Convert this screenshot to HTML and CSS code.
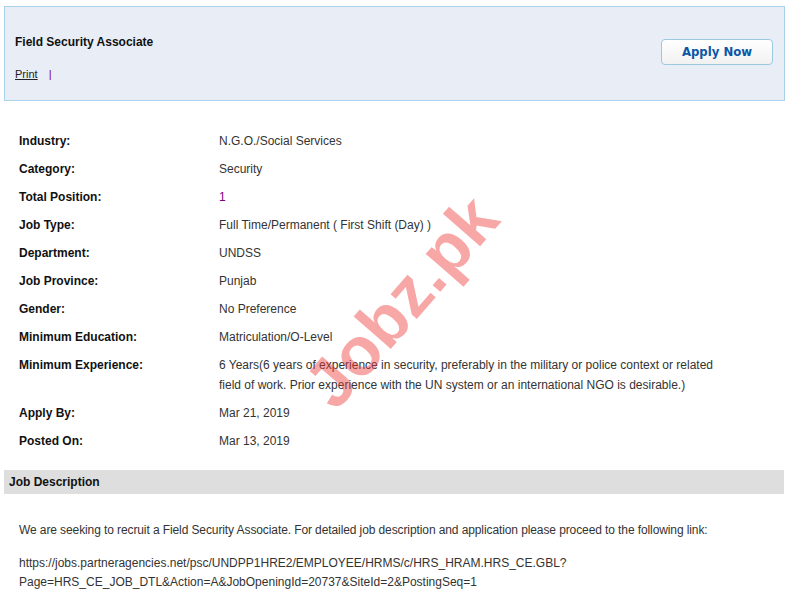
FILE: index.html
```html
<!DOCTYPE html>
<html lang="en">
<head>
    <meta charset="UTF-8">
    <meta name="viewport" content="width=device-width, initial-scale=1.0">
    <title>Field Security Associate</title>
    <link rel="stylesheet" href="styles.css">
</head>
<body>

    <!-- Job Header -->
    <div class="job-head">
        <div class="job-head-left">
            <h1 class="job-title">Field Security Associate</h1>
            <div class="job-tools">
                <a href="#" class="print-link">Print</a>
                <span class="sep">|</span>
            </div>
        </div>
        <a href="#" class="apply-btn">Apply Now</a>
    </div>

    <!-- Job Details -->
    <div class="details">
        <div class="label">Industry:</div>
        <div class="value">N.G.O./Social Services</div>

        <div class="label">Category:</div>
        <div class="value">Security</div>

        <div class="label">Total Position:</div>
        <div class="value purple">1</div>

        <div class="label">Job Type:</div>
        <div class="value">Full Time/Permanent ( First Shift (Day) )</div>

        <div class="label">Department:</div>
        <div class="value">UNDSS</div>

        <div class="label">Job Province:</div>
        <div class="value">Punjab</div>

        <div class="label">Gender:</div>
        <div class="value">No Preference</div>

        <div class="label">Minimum Education:</div>
        <div class="value">Matriculation/O-Level</div>

        <div class="label">Minimum Experience:</div>
        <div class="value">6 Years(6 years of experience in security, preferably in the military or police context or related field of work. Prior experience with the UN system or an international NGO is desirable.)</div>

        <div class="label">Apply By:</div>
        <div class="value">Mar 21, 2019</div>

        <div class="label">Posted On:</div>
        <div class="value">Mar 13, 2019</div>
    </div>

    <!-- Job Description -->
    <div class="section-bar">Job Description</div>

    <div class="description">
        <p class="intro">We are seeking to recruit a Field Security Associate. For detailed job description and application please proceed to the following link:</p>
        <p class="link-text">https://jobs.partneragencies.net/psc/UNDPP1HRE2/EMPLOYEE/HRMS/c/HRS_HRAM.HRS_CE.GBL?<br>Page=HRS_CE_JOB_DTL&amp;Action=A&amp;JobOpeningId=20737&amp;SiteId=2&amp;PostingSeq=1</p>
    </div>

    <!-- Watermark -->
    <div class="watermark">Jobz.pk</div>

</body>
</html>
```

FILE: styles.css
```css
body {
    margin: 0;
    padding: 6px 8px 0 4px;
    font-family: "Liberation Sans", Arial, sans-serif;
    font-size: 12px;
    color: #333;
    background: #fff;
    overflow: hidden;
}

/* Header */
.job-head {
    display: flex;
    justify-content: space-between;
    align-items: flex-start;
    height: 93px;
    padding: 0 11px 0 10px;
    background-color: #e9eef6;
    border: 1px solid #a9d3ea;
}

.job-title {
    margin: 27px 0 0;
    font-size: 12px;
    line-height: 16px;
    font-weight: bold;
    color: #111;
}

.job-tools {
    margin-top: 16px;
    line-height: 16px;
    font-size: 11px;
}

.print-link {
    color: #222;
    text-decoration: underline;
}

.sep {
    margin-left: 8px;
    color: #800080;
}

.apply-btn {
    margin-top: 32px;
    width: 110px;
    height: 24px;
    line-height: 24px;
    text-align: center;
    border: 1px solid #9cc8df;
    border-radius: 4px;
    background: linear-gradient(#ffffff, #f1f1f1);
    color: #0b57a6;
    font-family: "DejaVu Sans Condensed", "Liberation Sans", sans-serif;
    font-weight: bold;
    font-size: 13px;
    text-decoration: none;
}

/* Details */
.details {
    display: grid;
    grid-template-columns: 200px 502px;
    margin: 26px 0 0 15px;
    line-height: 20px;
}

.label,
.value {
    padding: 4px 0;
}

.label {
    font-weight: bold;
    color: #111;
}

.value.purple { color: #800080; }

/* Job description */
.section-bar {
    margin-top: 15px;
    margin-right: 1px;
    height: 24px;
    line-height: 24px;
    padding-left: 5px;
    background-color: #dedede;
    font-weight: bold;
    color: #111;
}

.description {
    padding-left: 15px;
}

.description p {
    margin: 0;
    line-height: 19px;
}

.description .intro {
    margin-top: 27px;
    letter-spacing: -0.1px;
}

.description .link-text {
    margin-top: 14px;
}

/* Watermark */
.watermark {
    position: absolute;
    left: 274px;
    top: 262px;
    transform: rotate(-49deg);
    font-family: "Liberation Sans", Arial, sans-serif;
    font-size: 68px;
    font-weight: bold;
    color: rgba(240, 60, 60, 0.45);
    pointer-events: none;
}
```
